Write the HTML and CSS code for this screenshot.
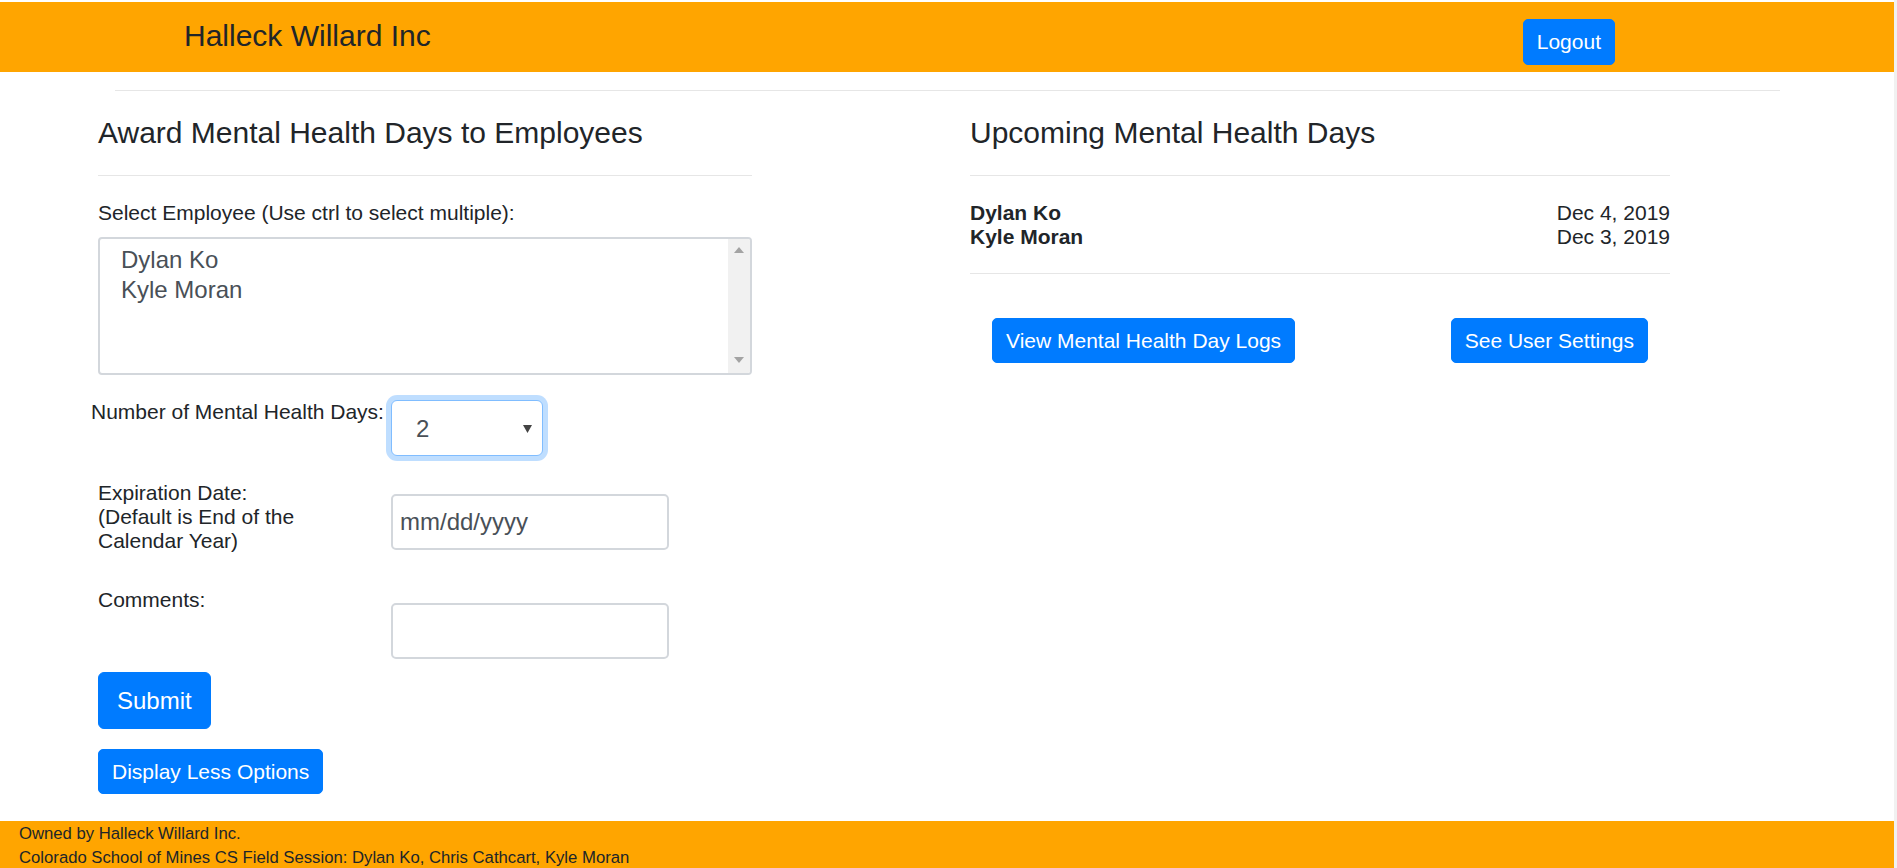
FILE: index.html
```html
<!DOCTYPE html>
<html lang="en">
<head>
<meta charset="utf-8">
<title>Halleck Willard Inc</title>
<link rel="stylesheet" href="styles.css">
</head>
<body>
<header class="topbar">
  <div class="brand">Halleck Willard Inc</div>
  <button class="btn btn-logout" type="button">Logout</button>
</header>
<hr class="rule-top">
<main class="content">
  <section class="col col-left">
    <h2 class="title">Award Mental Health Days to Employees</h2>
    <hr class="rule">
    <form class="award-form">
      <label class="field-label">Select Employee (Use ctrl to select multiple):</label>
      <div class="listbox">
        <ul class="options">
          <li>Dylan Ko</li>
          <li>Kyle Moran</li>
        </ul>
        <div class="vscroll">
          <svg class="scroll-arrow" width="10" height="6" viewBox="0 0 10 6"><polygon points="5,0 10,6 0,6" fill="#a3a3a3"/></svg>
          <svg class="scroll-arrow" width="10" height="6" viewBox="0 0 10 6"><polygon points="0,0 10,0 5,6" fill="#a3a3a3"/></svg>
        </div>
      </div>
      <div class="row row-number">
        <label class="row-label label-wide">Number of Mental Health Days:</label>
        <div class="select-box">
          <select class="num-select">
            <option>1</option>
            <option selected>2</option>
            <option>3</option>
          </select>
          <svg class="select-arrow" width="9" height="8" viewBox="0 0 9 8"><polygon points="0,0 9,0 4.5,8" fill="#444"/></svg>
        </div>
      </div>
      <div class="row row-exp">
        <label class="row-label"><span class="label-text">Expiration Date:<br>(Default is End of the Calendar Year)</span></label>
        <input class="text-input input-exp" type="text" placeholder="mm/dd/yyyy">
      </div>
      <div class="row row-comments">
        <label class="row-label">Comments:</label>
        <input class="text-input input-comments" type="text">
      </div>
      <div class="form-actions">
        <button class="btn btn-submit" type="button">Submit</button>
        <button class="btn btn-less" type="button">Display Less Options</button>
      </div>
    </form>
  </section>
  <section class="col col-right">
    <h2 class="title">Upcoming Mental Health Days</h2>
    <hr class="rule">
    <div class="upcoming">
      <div class="up-row"><span class="up-name">Dylan Ko</span><span class="up-date">Dec 4, 2019</span></div>
      <div class="up-row"><span class="up-name">Kyle Moran</span><span class="up-date">Dec 3, 2019</span></div>
    </div>
    <hr class="rule rule-after">
    <div class="actions">
      <button class="btn" type="button">View Mental Health Day Logs</button>
      <button class="btn" type="button">See User Settings</button>
    </div>
  </section>
</main>
<footer class="footer">
  <p class="foot-line">Owned by Halleck Willard Inc.</p>
  <p class="foot-line">Colorado School of Mines CS Field Session: Dylan Ko, Chris Cathcart, Kyle Moran</p>
</footer>
</body>
</html>
```
FILE: styles.css
```css
* {
  box-sizing: border-box;
}

html {
  background: #ffffff;
}

body {
  margin: 0;
  padding-top: 2px;
  border-right: 3px solid #f1f1f1;
  font-family: "Liberation Sans", Arial, sans-serif;
  font-size: 21px;
  line-height: 24px;
  color: #212529;
  background: #ffffff;
}

/* ---------- header ---------- */
.topbar {
  display: flex;
  justify-content: space-between;
  align-items: flex-start;
  height: 70px;
  padding: 16px 279px 0 184px;
  background: #ffa500;
}

.brand {
  font-size: 30px;
  line-height: 36px;
  color: #212529;
}

/* ---------- buttons ---------- */
.btn {
  font-family: "Liberation Sans", Arial, sans-serif;
  font-size: 21px;
  line-height: 29px;
  padding: 7px 13px;
  border: 1px solid #007bff;
  border-radius: 5px;
  background: #007bff;
  color: #ffffff;
  cursor: pointer;
}

.btn-logout {
  margin-top: 1px;
  line-height: 30px;
}

/* ---------- rules ---------- */
.rule-top {
  margin: 18px 114px 0 115px;
  height: 0;
  border: 0;
  border-top: 1px solid #e6e6e6;
}

.rule {
  margin: 24px 0 0;
  height: 0;
  border: 0;
  border-top: 1px solid #e6e6e6;
}

/* ---------- content ---------- */
.content {
  display: flex;
  gap: 218px;
  padding: 24px 0 0 98px;
}

.col-left {
  width: 654px;
}

.col-right {
  width: 700px;
}

.title {
  margin: 0;
  font-size: 30px;
  line-height: 36px;
  font-weight: 400;
  color: #212529;
}

.award-form {
  margin: 0;
}

.field-label {
  display: block;
  margin-top: 25px;
}

.listbox {
  display: flex;
  margin-top: 12px;
  height: 138px;
  border: 2px solid #d3d7dc;
  border-radius: 4px;
  overflow: hidden;
}

.options {
  flex: 1;
  list-style: none;
  margin: 0;
  padding: 6px 21px;
  font-size: 24px;
  line-height: 30px;
  color: #495057;
}

.vscroll {
  width: 22px;
  display: flex;
  flex-direction: column;
  justify-content: space-between;
  align-items: center;
  padding: 8px 0 10px;
  background: #f1f1f1;
}

.scroll-arrow {
  display: block;
}

.row {
  display: flex;
  align-items: flex-start;
}

.row-label {
  flex: 0 0 293px;
}

.label-wide {
  flex: 0 0 300px;
  margin-left: -7px;
}

.label-text {
  display: block;
  max-width: 240px;
}

.row-number {
  margin-top: 25px;
}

.select-box {
  display: flex;
  align-items: center;
  width: 152px;
  height: 56px;
  padding: 0 10px 0 24px;
  border: 1px solid #80bdff;
  border-radius: 6px;
  box-shadow: 0 0 0 5px rgba(0, 123, 255, 0.25);
  background: #ffffff;
}

.num-select {
  flex: 1;
  appearance: none;
  -webkit-appearance: none;
  border: 0;
  padding: 0;
  margin: 0;
  background: transparent;
  font-family: "Liberation Sans", Arial, sans-serif;
  font-size: 24px;
  color: #495057;
  outline: none;
}

.select-arrow {
  display: block;
  margin-top: 2px;
}

.row-exp {
  margin-top: 25px;
}

.row-comments {
  margin-top: 35px;
}

.text-input {
  width: 278px;
  height: 56px;
  padding: 0 7px;
  border: 2px solid #d3d7dc;
  border-radius: 5px;
  font-family: "Liberation Sans", Arial, sans-serif;
  font-size: 24px;
  color: #495057;
  background: #ffffff;
  outline: none;
}

.text-input::placeholder {
  color: #495057;
  opacity: 1;
}

.input-exp {
  margin-top: 13px;
}

.input-comments {
  margin-top: 15px;
}

.form-actions {
  display: flex;
  flex-direction: column;
  align-items: flex-start;
  gap: 20px;
  margin-top: 13px;
}

.btn-submit {
  font-size: 24px;
  line-height: 35px;
  padding: 10px 18px;
  border-radius: 6px;
}

/* ---------- right column ---------- */
.upcoming {
  margin-top: 25px;
}

.up-row {
  display: flex;
  justify-content: space-between;
}

.up-name {
  font-weight: 700;
}

.actions {
  display: flex;
  justify-content: space-between;
  padding: 0 22px;
  margin-top: 44px;
}

/* ---------- footer ---------- */
.footer {
  margin-top: 27px;
  padding: 1px 19px 12px;
  background: #ffa500;
  font-size: 16.7px;
  line-height: 24px;
  color: #212529;
}

.foot-line {
  margin: 0;
}
```
